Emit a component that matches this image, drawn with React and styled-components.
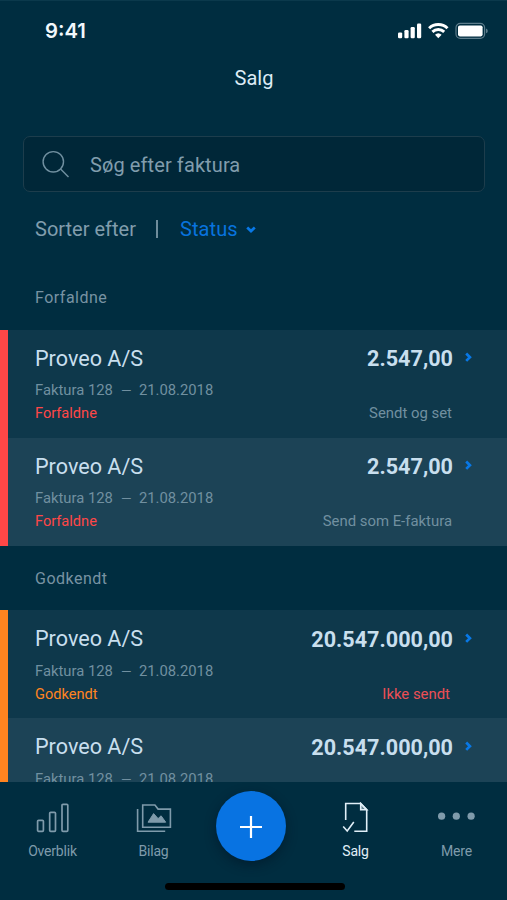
import React from 'react';
import styled, { createGlobalStyle } from 'styled-components';

const groups = [
  {
    title: 'Forfaldne',
    color: '#ff4747',
    rows: [
      { amount: '2.547,00', status: 'Forfaldne', note: 'Sendt og set' },
      { amount: '2.547,00', status: 'Forfaldne', note: 'Send som E-faktura' },
    ],
  },
  {
    title: 'Godkendt',
    color: '#ff8420',
    rows: [
      { amount: '20.547.000,00', status: 'Godkendt', note: 'Ikke sendt', alert: true },
      { amount: '20.547.000,00', status: 'Godkendt', note: 'Ikke sendt', alert: true },
    ],
  },
];

function StatusIcons() {
  return (
    <svg width='90' height='18' viewBox='0 0 90 18' fill='#fff'>
      <rect x='0' y='10.4' width='4.2' height='5.8' rx='1.2' />
      <rect x='6.4' y='8' width='4.2' height='8.2' rx='1.2' />
      <rect x='12.6' y='5' width='4.2' height='11.2' rx='1.2' />
      <rect x='19' y='1.5' width='4.2' height='14.7' rx='1.2' />
      <g fill='none' stroke='#fff' strokeWidth='2.9'>
        <path d='M31.1 6.2a13.2 13.2 0 0 1 18.4 0' />
        <path d='M34.4 9.9a8.5 8.5 0 0 1 11.8 0' />
      </g>
      <path d='M37 12.8a4.9 4.9 0 0 1 6.6 0l-3.3 3.4z' />
      <rect x='58' y='1.4' width='28.6' height='15' rx='4.4' fill='none' stroke='#5c7c8b' strokeWidth='1.2' />
      <rect x='60' y='3.4' width='24.6' height='11' rx='1.8' />
      <path d='M88 6.6q1.8.7 1.8 2.3T88 11.2z' fill='#5c7c8b' />
    </svg>
  );
}

function BarsIcon() {
  return (
    <svg width='34' height='30' viewBox='0 0 34 30' fill='none' stroke='currentColor' strokeWidth='1.7'>
      <rect x='1.6' y='17.3' width='5.8' height='11' rx='1' />
      <rect x='13.7' y='9.3' width='5.8' height='19' rx='1' />
      <rect x='26' y='1.3' width='5.8' height='27' rx='1' />
    </svg>
  );
}

function FolderIcon() {
  return (
    <svg width='36' height='30' viewBox='0 0 36 30' fill='none' stroke='currentColor' strokeWidth='1.6'>
      <path d='M6.7 2h12.2l3.2 4.1h12.3v18.2H6.7z' />
      <path d='M1.6 6v22.2h27.6' />
      <path
        d='M12 19.2l5.6-8.6 4.5 5 3-2.8 4.6 6.4z'
        fill='currentColor'
        strokeWidth='1'
        strokeLinejoin='round'
      />
    </svg>
  );
}

function DocumentIcon() {
  return (
    <svg width='28' height='32' viewBox='0 0 28 32' fill='none' stroke='currentColor' strokeWidth='1.6'>
      <path d='M3.7 18V1.5h15l6 6.2v21.5H12.3' />
      <path d='M18.7 1.5v6.2h6z' fill='currentColor' fillOpacity='.45' />
      <path d='M1.2 24.5l4 4.5L11.8 20' />
    </svg>
  );
}

function DotsIcon() {
  return (
    <svg width='38' height='12' viewBox='0 0 38 12' fill='currentColor'>
      <circle cx='3.6' cy='4.2' r='3.6' />
      <circle cx='18.3' cy='4.2' r='3.6' />
      <circle cx='33.1' cy='4.2' r='3.6' />
    </svg>
  );
}

function InvoiceRow({ amount, status, note, alert, color }) {
  return (
    <Row>
      <Line>
        <Customer>Proveo A/S</Customer>
        <Amount>{amount}</Amount>
        <Chevron width='8' height='13' viewBox='0 0 8 13'>
          <path d='M2.2 1.5L5.9 5.2 2.2 8.9' />
        </Chevron>
      </Line>
      <Meta>
        <span>Faktura 128</span>
        <span>—</span>
        <span>21.08.2018</span>
      </Meta>
      <Line>
        <Small $color={color}>{status}</Small>
        <Note $alert={alert}>{note}</Note>
      </Line>
    </Row>
  );
}

function App() {
  return (
    <Screen>
      <GlobalStyle />
      <StatusBar>
        <Time>9:41</Time>
        <StatusIcons />
      </StatusBar>
      <Title>Salg</Title>

      <Search>
        <svg width='28' height='28' viewBox='0 0 28 28' fill='none' stroke='#7090a0' strokeWidth='1.4'>
          <circle cx='11.3' cy='11.8' r='10.2' />
          <path d='M18.6 19.1l7.9 7.9' />
        </svg>
        <Placeholder>Søg efter faktura</Placeholder>
      </Search>

      <SortBar>
        <span>Sorter efter</span>
        <Divider />
        <SortValue>Status</SortValue>
        <Chevron width='10' height='8' viewBox='0 0 10 8'>
          <path d='M1.2 2.5L5 6.1 8.8 2.5' />
        </Chevron>
      </SortBar>

      <List>
        {groups.map((group) => (
          <div key={group.title}>
            <GroupTitle>{group.title}</GroupTitle>
            <Rows $color={group.color}>
              {group.rows.map((row, i) => (
                <InvoiceRow key={i} color={group.color} {...row} />
              ))}
            </Rows>
          </div>
        ))}
      </List>

      <TabBar>
        <Tab>
          <IconBox><BarsIcon /></IconBox>
          Overblik
        </Tab>
        <Tab>
          <IconBox><FolderIcon /></IconBox>
          Bilag
        </Tab>
        <AddButton>
          <svg width='24' height='26' viewBox='0 0 24 26' stroke='#fff' strokeWidth='2.2'>
            <path d='M12 3v22M1 14h22' />
          </svg>
        </AddButton>
        <Tab $active>
          <IconBox><DocumentIcon /></IconBox>
          Salg
        </Tab>
        <Tab>
          <IconBox><DotsIcon /></IconBox>
          Mere
        </Tab>
        <HomeIndicator />
      </TabBar>
    </Screen>
  );
}

export default App;

const GlobalStyle = createGlobalStyle`
  * {
    box-sizing: border-box;
  }

  body {
    margin: 0;
    background: #002d40;
  }
`;

const Screen = styled.div`
  display: flex;
  flex-direction: column;
  width: 507px;
  height: 900px;
  overflow: hidden;
  background: #002d40;
  border-top: 1px solid #0b394c;
  font-family: Roboto, sans-serif;
  color: #c8dfee;
`;

const StatusBar = styled.div`
  display: flex;
  flex: none;
  justify-content: space-between;
  align-items: center;
  height: 59px;
  padding: 0 19px 0 45px;
`;

const Time = styled.div`
  font-family: Inter, sans-serif;
  font-size: 20.3px;
  font-weight: 600;
  color: #f2f8fc;
`;

const Title = styled.div`
  flex: none;
  height: 36px;
  padding-left: 1px;
  line-height: 36px;
  text-align: center;
  font-size: 20px;
  color: #dcebf5;
`;

const Search = styled.div`
  display: flex;
  flex: none;
  align-items: center;
  height: 56px;
  margin: 40px 22px 0 23px;
  padding-left: 18px;
  background: #002738;
  border: 1px solid #1d3d4c;
  border-radius: 7px;
`;

const Placeholder = styled.div`
  margin-left: 20px;
  padding-top: 2px;
  font-size: 20px;
  letter-spacing: 0.1px;
  color: #819dad;
`;

const SortBar = styled.div`
  display: flex;
  flex: none;
  align-items: center;
  height: 73px;
  padding-left: 35px;
  font-size: 20px;
  color: #819dad;
`;

const Divider = styled.div`
  width: 2px;
  height: 18px;
  margin: 0 22px 0 20px;
  background: #6f8d9c;
`;

const SortValue = styled.div`
  margin-right: 8px;
  letter-spacing: 0.1px;
  color: #0873de;
`;

const Chevron = styled.svg`
  fill: none;
  stroke: #0878e6;
  stroke-width: 2.7;
`;

const List = styled.div`
  flex: 1;
  min-height: 0;
  overflow: hidden;
`;

const GroupTitle = styled.div`
  height: 64.7px;
  padding-left: 35px;
  line-height: 65px;
  font-size: 16px;
  letter-spacing: 0.5px;
  color: #7893a3;
`;

const Rows = styled.div`
  border-left: 8px solid ${(props) => props.$color};
`;

const Row = styled.div`
  height: 108px;
  padding: 14px 35px 0 27px;
  background: #0e384b;

  &:nth-child(even) {
    background: #1c4356;
  }
`;

const Line = styled.div`
  display: flex;
  align-items: center;
`;

const Customer = styled.div`
  flex: 1;
  line-height: 30px;
  font-size: 21.6px;
`;

const Amount = styled.div`
  margin-right: 11px;
  line-height: 29px;
  font-size: 21.6px;
  font-weight: 700;
`;

const Meta = styled.div`
  display: flex;
  gap: 8px;
  margin-top: 5.4px;
  line-height: 23px;
  font-size: 14.8px;
  color: #7190a0;

  span:nth-child(2) {
    width: 10px;
    font-size: 13.5px;
  }
`;

const Small = styled.div`
  line-height: 23px;
  font-size: 14.6px;
  color: ${(props) => props.$color};
`;

const Note = styled(Small)`
  margin: 0 ${(props) => (props.$alert ? '22px' : '20px')} 0 auto;
  font-size: 14.9px;
  color: ${(props) => (props.$alert ? '#ec4f55' : '#7190a0')};
`;

const TabBar = styled.div`
  position: relative;
  display: grid;
  flex: none;
  grid-template-columns: repeat(5, 101px);
  height: 118px;
  padding-top: 17px;
  padding-left: 2px;
  background: #002d40;
`;

const Tab = styled.div`
  display: flex;
  flex-direction: column;
  align-items: center;
  font-size: 14px;
  letter-spacing: -0.2px;
  line-height: 22px;
  color: ${(props) => (props.$active ? '#e0eff8' : '#7f9bab')};
`;

const IconBox = styled.div`
  display: flex;
  align-items: center;
  height: 38px;
  margin-bottom: 3px;
`;

const AddButton = styled.button`
  display: grid;
  place-items: center;
  width: 70px;
  height: 70px;
  margin-top: -8px;
  margin-left: 12px;
  padding: 0;
  border: 0;
  border-radius: 50%;
  background: #0873e2;
  box-shadow: 0 4px 12px rgba(0, 15, 30, 0.45);
`;

const HomeIndicator = styled.div`
  position: absolute;
  left: 165px;
  bottom: 10px;
  width: 180px;
  height: 7px;
  border-radius: 4px;
  background: #000;
`;
